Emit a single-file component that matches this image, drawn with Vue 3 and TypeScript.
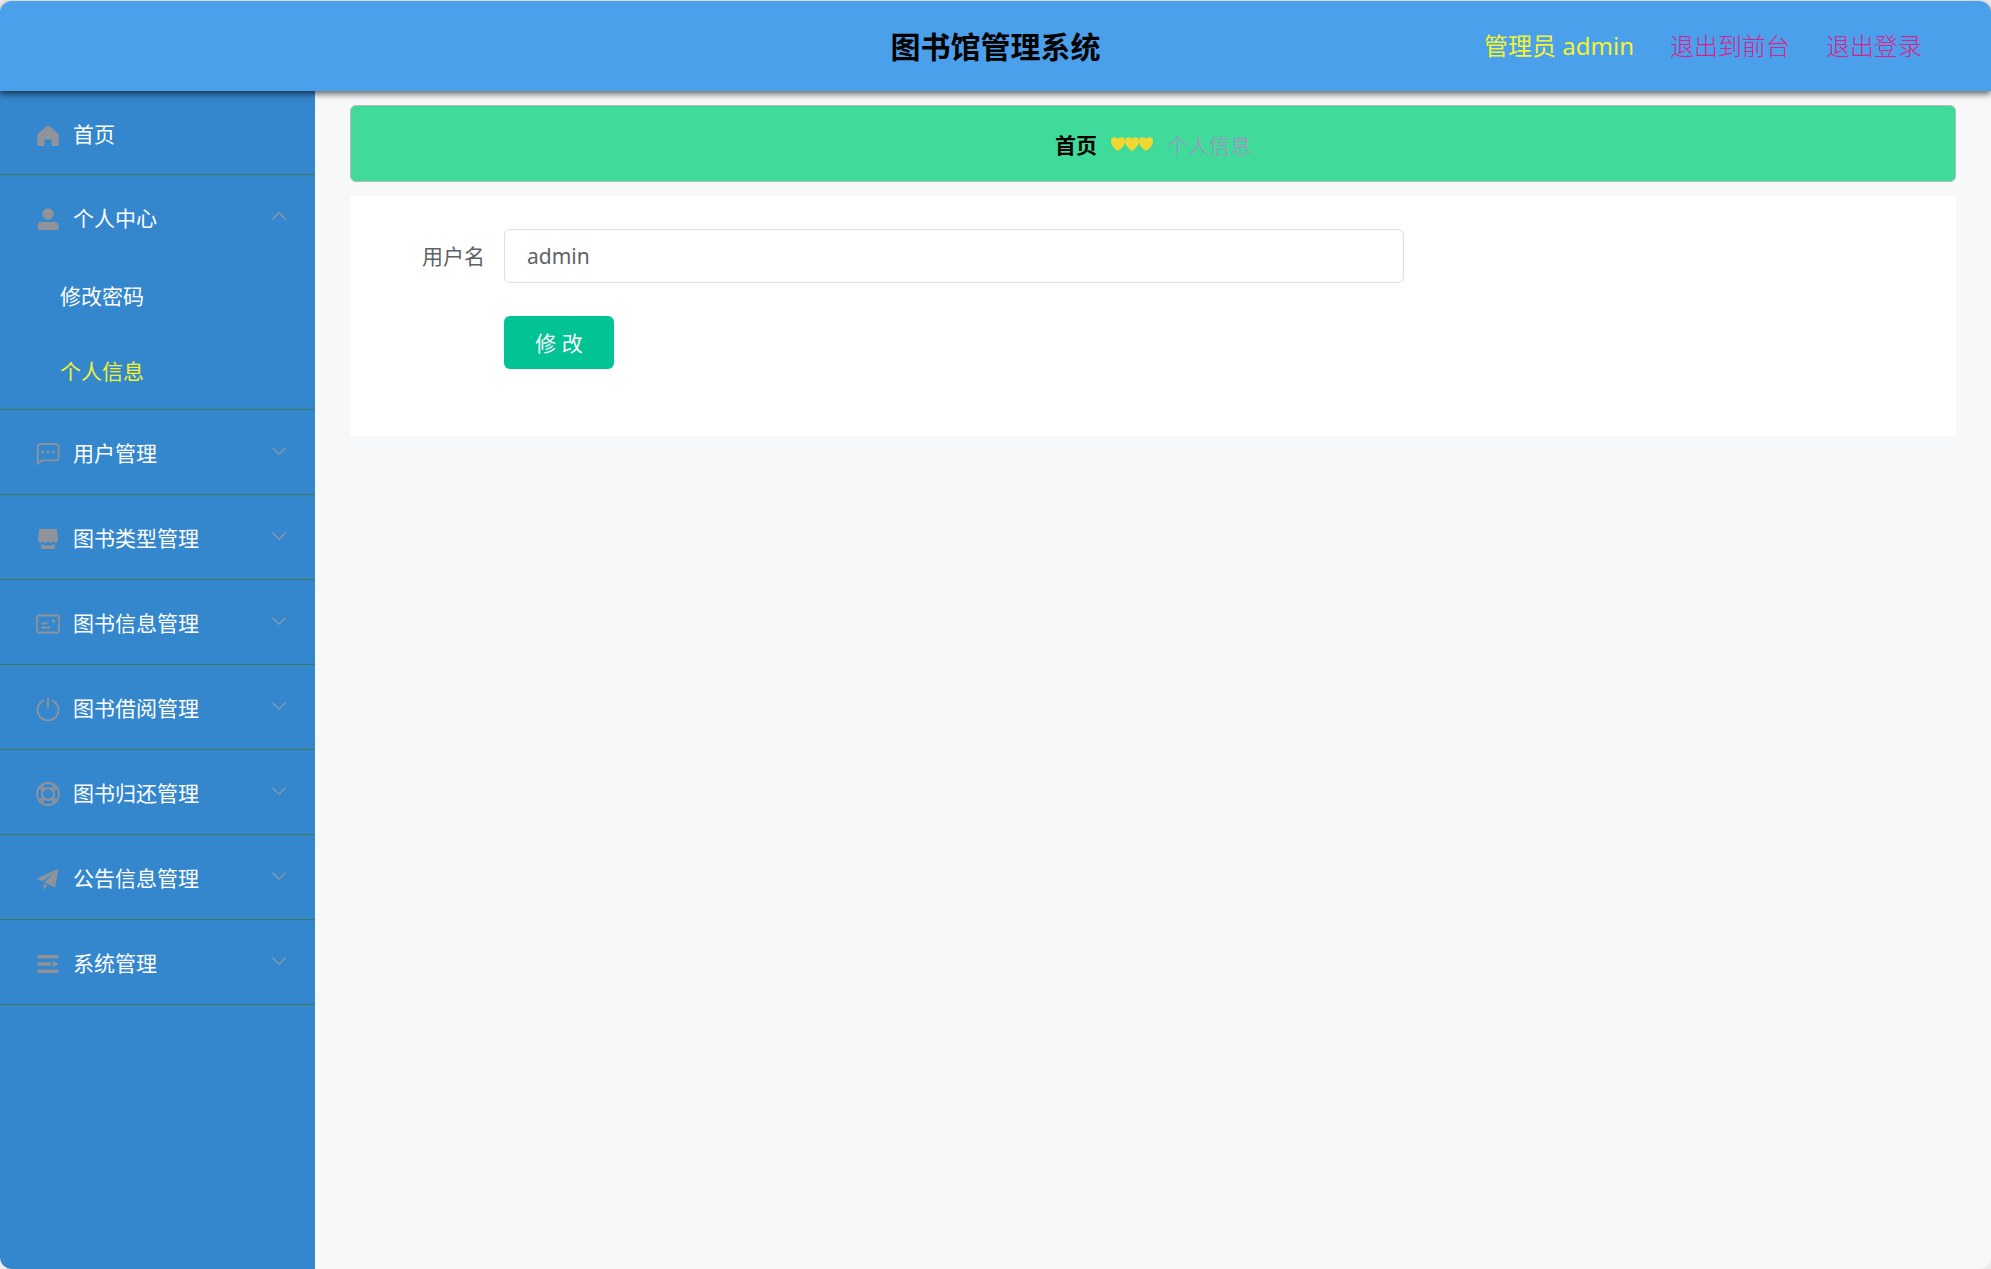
<script setup lang="ts">
import { ref } from 'vue'

interface MenuEntry {
  title: string
  icon: string
  children?: string[]
}

const menu: MenuEntry[] = [
  { title: '个人中心', icon: 'user', children: ['修改密码', '个人信息'] },
  { title: '用户管理', icon: 'chat' },
  { title: '图书类型管理', icon: 'shop' },
  { title: '图书信息管理', icon: 'postcard' },
  { title: '图书借阅管理', icon: 'power' },
  { title: '图书归还管理', icon: 'help' },
  { title: '公告信息管理', icon: 'plane' },
  { title: '系统管理', icon: 'unfold' },
]

const opened = ref('个人中心')
const active = ref('个人信息')
const username = ref('admin')

function toggle(title: string) {
  opened.value = opened.value === title ? '' : title
}
</script>

<template>
  <div class="app">
    <header class="header">
      <h1 class="title">图书馆管理系统</h1>
      <div class="account">
        <span class="who">管理员 admin</span>
        <a class="exit" href="#">退出到前台</a>
        <a class="exit" href="#">退出登录</a>
      </div>
    </header>

    <div class="body">
      <nav class="sidebar">
        <a class="row home" href="#">
          <svg class="icon" viewBox="0 0 24 24" fill="currentColor">
            <path d="M12 2.5 22.2 10.4Q22.8 11 22.8 12V22.2Q22.8 23 22 23H15.5V16.5H8.5V23H2.2Q1.4 23 1.4 22.2V12Q1.4 11 2 10.4Z" />
          </svg>
          <span class="label">首页</span>
        </a>

        <div v-for="item in menu" :key="item.title" class="group">
          <button type="button" class="row" @click="toggle(item.title)">
            <svg v-if="item.icon === 'user'" class="icon" viewBox="0 0 24 24" fill="currentColor">
              <circle cx="12" cy="7" r="5.8" />
              <path d="M4.5 15H19.5Q22.6 15 22.6 18.5V22Q22.6 23 21.6 23H2.6Q1.6 23 1.6 22V18.5Q1.6 15 4.5 15Z" />
            </svg>
            <svg v-else-if="item.icon === 'chat'" class="icon line" viewBox="0 0 24 24">
              <path d="M1.8 21.5V4.6Q1.8 2.2 4.2 2.2H20.2Q22.6 2.2 22.6 4.6V16Q22.6 18.4 20.2 18.4H6.2Z" />
              <path class="solid" d="M5.6 8.8h2.6v2.6H5.6zM10.8 8.8h2.6v2.6h-2.6zM16 8.8h2.6v2.6H16z" />
            </svg>
            <svg v-else-if="item.icon === 'shop'" class="icon" viewBox="0 0 24 24" fill="currentColor">
              <path d="M4.2 2H19.8Q20.8 2 21 3L22 13.2Q22 15.8 19.8 15.8 18.4 15.8 17.2 14.5 16 15.8 14.6 15.8 13.2 15.8 12 14.5 10.8 15.8 9.4 15.8 8 15.8 6.8 14.5 5.6 15.8 4.2 15.8 2 15.8 2 13.2L3 3Q3.2 2 4.2 2Z" />
              <path d="M5 17.4H7.6Q9.4 18.6 12 18.6T16.4 17.4H19V21Q19 22 18 22H6Q5 22 5 21Z" />
            </svg>
            <svg v-else-if="item.icon === 'postcard'" class="icon line" viewBox="0 0 24 24">
              <rect x="1" y="3.5" width="22" height="17" rx="1.5" />
              <path d="M5.500 11.5H11.5M5.5 15.500H14" />
              <path class="solid" d="M16 7.500h3v3h-3z" />
            </svg>
            <svg v-else-if="item.icon === 'power'" class="icon line" viewBox="0 0 24 24">
              <path d="M8 3.400A10.400 10.400 0 1 0 16 3.400M12 0.500V11" />
            </svg>
            <svg v-else-if="item.icon === 'help'" class="icon line" viewBox="0 0 24 24">
              <circle cx="12" cy="12" r="11" />
              <circle cx="12" cy="12" r="6" />
              <path d="M3.600 5.400 7.400 9M5.400 3.600 9 7.400M20.400 5.400 16.600 9M18.600 3.600 15 7.400M3.600 18.600 7.400 15M5.400 20.400 9 16.600M20.400 18.600 16.600 15M18.600 20.400 15 16.600" />
            </svg>
            <svg v-else-if="item.icon === 'plane'" class="icon" viewBox="0 0 24 24" fill="currentColor">
              <path d="M22.500 1.500 1 11.500 6.300 14.300 18.500 5.600 8.300 15.400 19 20.500ZM7.500 16.600V23L11.500 18.600Z" />
            </svg>
            <svg v-else class="icon" viewBox="0 0 24 24" fill="currentColor">
              <path d="M2.500 3H21.500Q22.500 3 22.500 4V6.500H1.500V4Q1.500 3 2.500 3ZM2.500 10.200H15V13.800H2.500Q1.500 13.800 1.500 12.800V11.200Q1.500 10.200 2.500 10.200ZM16.500 8.500 22.500 12 16.500 15.500ZM1.500 17.500H22.500V20Q22.500 21 21.500 21H2.500Q1.500 21 1.500 20Z" />
            </svg>
            <span class="label">{{ item.title }}</span>
            <svg class="arrow" :class="{ up: opened === item.title }" viewBox="0 0 16 16">
              <path d="M1.500 4.800 8 11.200 14.500 4.800" />
            </svg>
          </button>
          <template v-if="item.children && opened === item.title">
            <a
              v-for="child in item.children"
              :key="child"
              href="#"
              class="sub"
              :class="{ active: active === child }"
              @click.prevent="active = child"
            >{{ child }}</a>
          </template>
        </div>
      </nav>

      <main class="main">
        <div class="crumbs">
          <a class="crumb-home" href="#">首页</a>
          <span class="hearts">
            <svg v-for="n in 3" :key="n" class="heart" viewBox="0 0 14 14">
              <path d="M7 14Q0 9 0 4.400 0 0.300 3.600 0.300 6 0.300 7 1.800 8 0.300 10.400 0.300 14 0.300 14 4.400 14 9 7 14Z" />
            </svg>
          </span>
          <span class="crumb-current">个人信息</span>
        </div>

        <form class="card" @submit.prevent>
          <div class="field">
            <label class="field-label" for="username">用户名</label>
            <input id="username" v-model="username" class="field-input" type="text" />
          </div>
          <button class="submit" type="submit">修 改</button>
        </form>
      </main>
    </div>
  </div>
</template>

<style>
body {
  margin: 0;
  background: #ececec;
}
</style>

<style scoped>
.app {
  display: flex;
  flex-direction: column;
  box-sizing: border-box;
  min-height: 100vh;
  padding-top: 1px;
  font-family: "Noto Sans", "Noto Sans CJK SC", sans-serif;
  font-size: 21px;
}
a {
  text-decoration: none;
}
.header {
  position: relative;
  z-index: 1;
  display: grid;
  grid-template-columns: 1fr auto 1fr;
  align-items: center;
  height: 90px;
  border-radius: 12px 12px 0 0;
  background: #4aa0ea;
  box-shadow: 0 3px 6px rgba(0, 0, 0, 0.6);
}
.title {
  grid-column: 2;
  margin: 0;
  padding-top: 2px;
  font-size: 30px;
  line-height: 40px;
  font-weight: 700;
  color: #000;
}
.account {
  display: flex;
  justify-content: flex-end;
  gap: 36px;
  padding-right: 69px;
  font-size: 24px;
  line-height: 32px;
}
.who {
  color: #f3f32f;
}
.exit {
  color: #dc1f8f;
  font-weight: 300;
}
.body {
  display: flex;
  flex: 1;
  border-radius: 0 0 12px 12px;
  overflow: hidden;
  background: #f6f8fa;
}
.sidebar {
  flex: none;
  width: 315px;
  background: #3487cd;
}
.group,
.home {
  border-bottom: 1px solid #3e7b52;
}
.row {
  display: flex;
  align-items: center;
  box-sizing: border-box;
  width: 100%;
  height: 84px;
  padding: 4px 28px 0 36px;
  font-family: inherit;
  font-size: 21px;
  color: #fff;
}
button.row {
  border: 0;
  background: none;
  text-align: left;
  cursor: pointer;
}
.icon {
  flex: none;
  width: 24px;
  height: 24px;
  margin-right: 13px;
  color: #909399;
}
.line {
  fill: none;
  stroke: currentColor;
  stroke-width: 1.8;
}
.solid {
  fill: currentColor;
  stroke: none;
}
.label {
  flex: 1;
  padding-bottom: 2px;
  line-height: 30px;
}
.arrow {
  flex: none;
  width: 16px;
  height: 16px;
  margin-bottom: 6px;
  fill: none;
  stroke: #8a9aab;
  stroke-width: 1.3;
}
.up {
  transform: rotate(180deg);
}
.sub {
  display: block;
  padding-left: 60px;
  line-height: 75px;
  color: #fff;
}
.sub.active {
  color: #f3f32f;
}
.main {
  flex: 1;
  min-width: 0;
  padding: 14px 35px;
}
.crumbs {
  display: flex;
  align-items: center;
  justify-content: center;
  gap: 14px;
  box-sizing: border-box;
  height: 77px;
  border: 1px solid #b4bcb8;
  border-radius: 6px;
  background: #40da9a;
}
.crumb-home {
  font-weight: 700;
  color: #000;
}
.hearts {
  display: flex;
}
.heart {
  width: 14px;
  height: 14px;
  fill: #f0d732;
}
.crumb-current {
  font-weight: 300;
  color: #b088c8;
}
.card {
  margin-top: 14px;
  padding: 33px 33px 67px 74px;
  background: #fff;
}
.field {
  display: flex;
  align-items: center;
  margin-bottom: 33px;
}
.field-label {
  box-sizing: border-box;
  flex: none;
  width: 80px;
  padding: 0 19px 2px 0;
  display: flex;
  justify-content: flex-end;
  color: #606266;
  white-space: nowrap;
}
.field-input {
  box-sizing: border-box;
  flex: 0 1 900px;
  min-width: 0;
  height: 54px;
  padding: 0 22px;
  border: 1px solid #dcdfe6;
  border-radius: 6px;
  background: #fff;
  font-family: inherit;
  font-size: 21px;
  color: #606266;
}
.submit {
  display: block;
  width: 110px;
  height: 53px;
  margin-left: 80px;
  padding: 0 0 2px;
  border: 0;
  border-radius: 6px;
  background: #02c394;
  font-family: inherit;
  font-size: 21px;
  color: #fff;
}
</style>
